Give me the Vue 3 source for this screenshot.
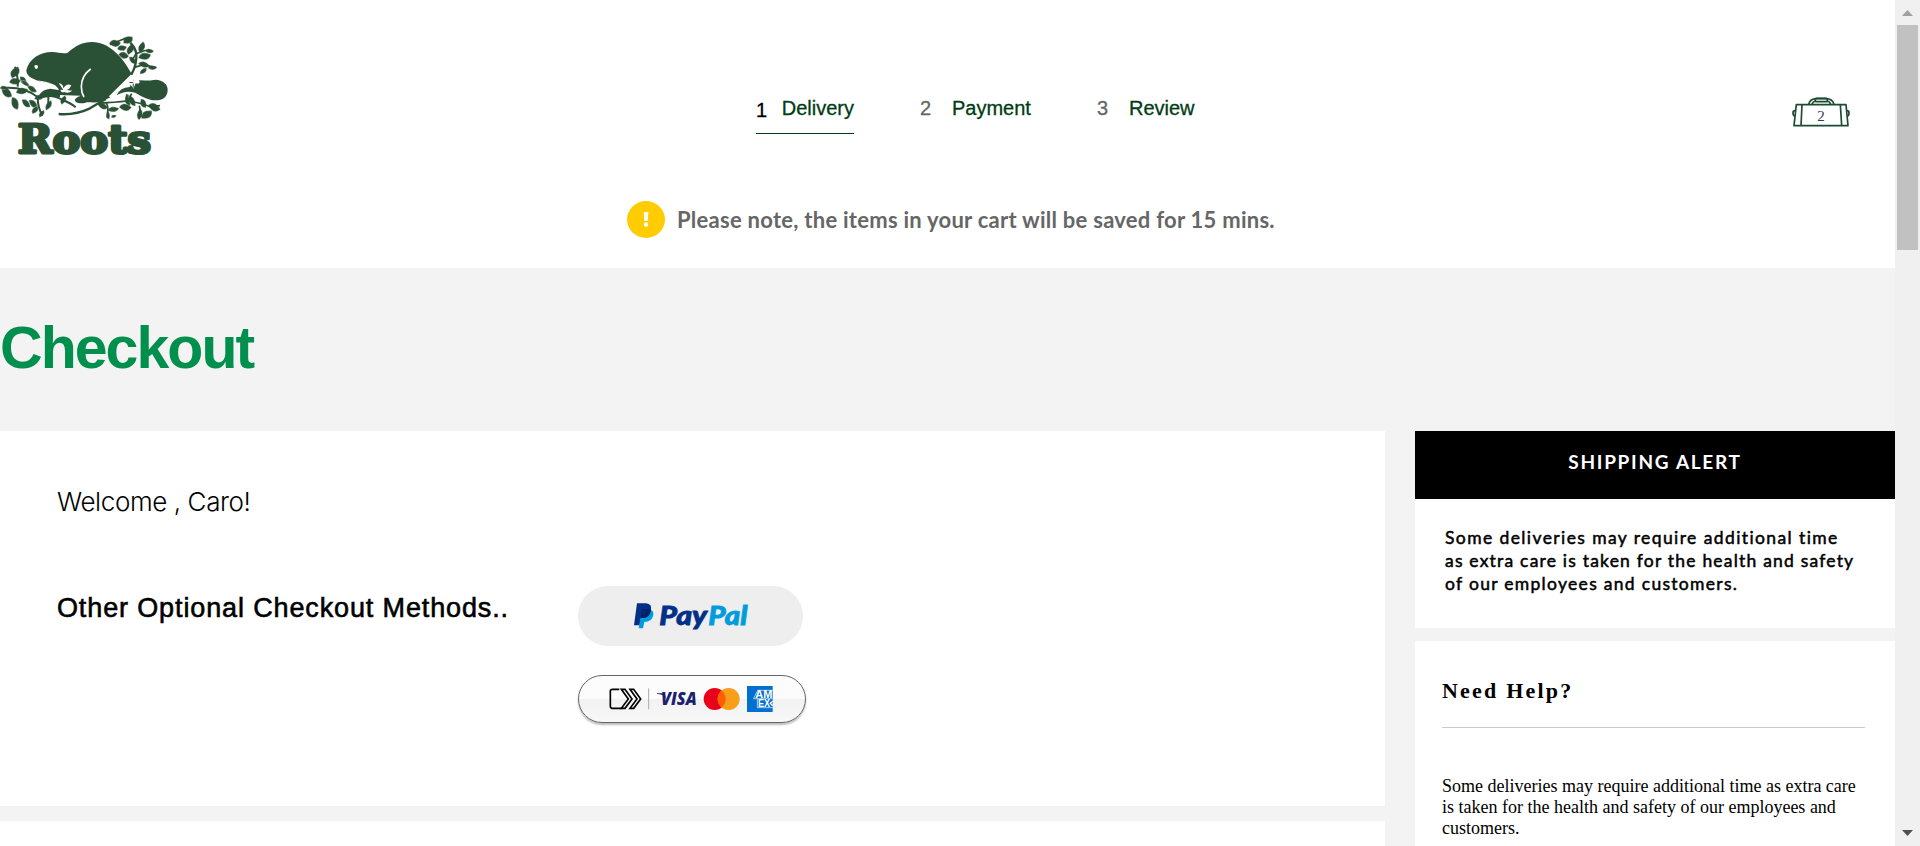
<script setup>
const steps = [
  { n: 1, label: 'Delivery', active: true },
  { n: 2, label: 'Payment', active: false },
  { n: 3, label: 'Review', active: false },
]
// x, y, tilt in degrees, half length, half width
const leaves = [
  [45, 157, 62, 20, 12], [45, 184, 10, 18, 10], [70, 182, -50, 16, 9], [20, 218, -35, 20, 12], [10, 203, 10, 11, 6],
  [45, 250, -65, 21, 11], [66, 213, 15, 19, 10], [78, 250, -40, 17, 9], [100, 252, -40, 18, 9], [96, 207, -30, 17, 8],
  [105, 270, 60, 14, 8], [125, 281, 60, 13, 7], [118, 232, 20, 16, 8], [146, 256, 65, 17, 8], [76, 190, -30, 15, 6],
  [345, 70, 5, 18, 11], [384, 60, 35, 17, 12], [366, 84, 15, 15, 9], [371, 106, -10, 16, 10], [391, 88, 70, 18, 10],
  [425, 82, 75, 18, 10], [448, 93, 0, 14, 7], [434, 109, 15, 20, 11], [398, 121, -40, 15, 8], [432, 134, -10, 18, 9],
  [457, 143, 5, 14, 7], [430, 153, 45, 14, 7], [384, 240, -75, 20, 10], [396, 243, -55, 19, 9], [376, 262, 0, 19, 11],
  [430, 250, -60, 16, 9], [463, 262, -20, 20, 12], [440, 284, 35, 20, 12], [419, 283, 85, 18, 8], [340, 268, 10, 18, 8],
  [324, 286, -75, 13, 6], [341, 289, 20, 9, 5], [308, 258, -20, 17, 9], [190, 240, 70, 15, 8],
]
const methodsTitle = 'Other Optional Checkout Methods..'
</script>

<template>
  <div class="window">
    <div class="page">
      <header class="header">
        <div class="topbar">
          <svg class="logo" viewBox="0 0 570 450" fill="#2a5135">
            <path
              v-for="(l, i) in leaves"
              :key="i"
              :d="`M${-l[3]} 0Q${-l[3] * 0.3} ${-l[4] * 2} ${l[3]} 0Q${l[3] * 0.3} ${l[4] * 2} ${-l[3]} 0Z`"
              :transform="`translate(${l[0]} ${l[1]}) rotate(${-l[2]})`"
              stroke="#fff"
              stroke-width="1"
            />
            <path d="M79 151C87 116 120 96 156 96C176 96 190 103 203 98C226 78 247 66 277 66C326 66 366 109 393 158L397 164L329 233L318 238C306 250 284 247 260 247C252 252 228 251 225 242C224 234 232 232 242 227L180 225C180 205 166 193 149 190C130 187 117 184 106 179C89 174 79 163 79 151Z" />
            <path d="M111 181Q132 184 154 190L130 188Z" fill="#fff" />
            <path d="M103 137Q109 132 114 138Q115 147 107 147Q103 143 103 137Z" fill="#fff" />
            <path d="M272 147Q244 167 244 200Q244 218 252 231" fill="none" stroke="#fff" stroke-width="5" />
            <path d="M176 189Q190 192 190 205Q200 188 214 196Q209 208 199 210L217 212Q204 222 193 216Q184 220 181 209L190 210Z" fill="#fff" />
            <path d="M118 224Q128 208 151 206L180 211V231Q150 228 130 234Z" />
            <path d="M400 178Q435 185 466 179C490 180 503 193 503 209C503 230 489 241 466 241C442 240 426 229 405 218Q377 209 350 226Q360 202 389 201Z" />
            <path d="M382 185Q392 176 400 182L399 173Q416 173 418 183Q422 193 407 190L400 206Q392 192 382 185Z" fill="#fff" />
            <path d="M388 187L400 188M400 191L399 204" fill="none" stroke="#2a5135" stroke-width="3" />
            <path d="M176 282Q226 286 270 265Q297 248 318 237M394 164Q411 134 409 101Q405 81 391 69" fill="none" stroke="#2a5135" stroke-width="7" />
            <path d="M395 166L329 231" fill="none" stroke="#fff" stroke-width="6" />
            <path d="M10 204Q70 199 113 231Q155 221 188 240Q214 250 227 262M114 232Q111 256 127 287M145 229V258M53 200Q56 178 45 140" fill="none" stroke="#2a5135" stroke-width="6" />
            <path d="M298 249Q346 247 381 243Q421 247 452 261L480 257M320 250Q326 263 322 293M383 243L395 221M398 118L408 101L437 91M404 142L429 134L469 143M330 74L376 55M418 257L424 291" fill="none" stroke="#2a5135" stroke-width="5" />
            <text x="53" y="400" textLength="400" lengthAdjust="spacingAndGlyphs" class="wordmark">Roots</text>
          </svg>
          <nav class="steps">
            <div v-for="s in steps" :key="s.n" class="step" :class="{ active: s.active }">
              <span class="num">{{ s.n }}</span><span class="label">{{ s.label }}</span>
            </div>
          </nav>
          <div class="bag">
            <svg viewBox="0 0 174 90" fill="none" stroke="#1b4b31" stroke-width="5" stroke-linejoin="round">
              <path d="M13 23H162L168 86H6ZM30 23L27 86M145 23L149 86" />
              <path d="M50 22Q54 5 74 5H102Q121 5 126 22M60 22Q62 13 72 12M104 12Q114 13 116 22" />
              <rect x="70" y="4" width="36" height="10" rx="3" />
              <path d="M10 41Q3 41 3 47Q3 56 9 57M164 41Q171 41 171 47Q171 56 166 57" />
            </svg>
            <span class="bag-count">2</span>
          </div>
        </div>
        <div class="notice">
          <span class="notice-icon">
            <svg viewBox="0 0 38 37"><ellipse cx="19" cy="18.5" rx="19" ry="18.5" fill="#fc0" /><path d="M16.7 11H21.3L20.7 20H17.3Z" fill="#fff" /><circle cx="19" cy="23.5" r="2.2" fill="#fff" /></svg>
          </span>
          <span class="notice-text">Please note, the items in your cart will be saved for 15 mins.</span>
        </div>
      </header>

      <h1 class="title"><span>Checkout</span></h1>

      <div class="columns">
        <main class="main">
          <section class="card welcome-card">
            <p class="welcome">Welcome , Caro!</p>
            <div class="methods">
              <h2>{{ methodsTitle }}</h2>
              <div class="buttons">
                <button class="pay paypal" aria-label="PayPal">
                  <svg viewBox="0 0 342 80">
                    <path d="M24 21H48Q60 23 58 36Q54 57 31 57L27 76H14Z" fill="#009cde" />
                    <path d="M9 1H36Q55 3 51 22Q47 45 25 45H20L16 67H0Z" fill="#003087" />
                    <path d="M25 18H51Q49 45 25 45H20Z" fill="#012169" />
                    <text x="76" y="67" textLength="143" lengthAdjust="spacingAndGlyphs" fill="#003087" stroke="#003087">Pay</text>
                    <text x="223" y="67" textLength="117" lengthAdjust="spacingAndGlyphs" fill="#009cde" stroke="#009cde">Pal</text>
                  </svg>
                </button>
                <button class="pay src" aria-label="Click to pay">
                  <svg viewBox="0 0 492 78">
                    <g fill="none" stroke="#000" stroke-width="5">
                      <path d="M31 10H10Q4 10 4 16V61Q4 67 10 67H37" />
                      <path d="M37 10H48L69 39L48 67H37L58 39ZM63 10H74L95 39L74 67H63L84 39Z" />
                    </g>
                    <path d="M119 7V70" stroke="#aaa" stroke-width="3" />
                    <path d="M144 22H166L176 48L170 35Q162 25 144 24Z" fill="#1a1f71" />
                    <text x="156" y="58" textLength="107" lengthAdjust="spacingAndGlyphs" class="visa">VISA</text>
                    <circle cx="317" cy="39" r="33" fill="#eb001b" /><circle cx="359" cy="39" r="33" fill="#f79e1b" />
                    <path d="M338 13.600A33 33 0 0 1 338 64.400A33 33 0 0 1 338 13.600Z" fill="#ff5f00" />
                    <rect x="414" width="77" height="78" fill="#016fd0" />
                    <text x="439" y="36" textLength="51" lengthAdjust="spacingAndGlyphs" class="amex">AM</text>
                    <text x="447" y="62" textLength="36" lengthAdjust="spacingAndGlyphs" class="amex">EX</text>
                    <path d="M491 46L484 52L491 59" fill="none" stroke="#fff" stroke-width="4" />
                    <path d="M434 38L446 13H491M445 38V65H491M434 38H491" stroke="#fff" stroke-width="2" fill="none" />
                  </svg>
                </button>
              </div>
            </div>
          </section>
          <section class="card next-card"></section>
        </main>

        <aside class="side">
          <section class="card">
            <h3 class="alert-title">SHIPPING ALERT</h3>
            <p class="alert-text">
              <span class="l1">Some deliveries may require additional time</span><br />
              <span class="l2">as extra care is taken for the health and safety</span><br />
              <span class="l3">of our employees and customers.</span>
            </p>
          </section>
          <section class="card help">
            <h3>Need Help?</h3>
            <p>Some deliveries may require additional time as extra care<br />is taken for the health and safety of our employees and<br />customers.</p>
          </section>
        </aside>
      </div>
    </div>
    <div class="scrollbar">
      <svg viewBox="0 0 11 6"><path d="M0 6L5.500 0L11 6Z" fill="#a0a0a0" /></svg>
      <div class="thumb"></div>
      <svg class="down" viewBox="0 0 11 6"><path d="M0 0H11L5.500 6Z" fill="#505050" /></svg>
    </div>
  </div>
</template>

<style>
html, body { margin: 0; overflow: hidden; }
</style>

<style scoped>
.window { display: flex; width: 1920px; height: 846px; overflow: hidden; font-family: "Liberation Sans", Arial, sans-serif; color: #000; }
.page { width: 1895px; height: 846px; overflow: hidden; background: #f3f3f3; }
h1, h2, h3, p { margin: 0; font-weight: normal; }
svg { display: block; }

.header { height: 268px; background: #fff; }
.topbar { display: flex; height: 170px; }
.logo { width: 190px; height: 150px; margin-top: 20px; }
.wordmark { font: bold 118px "DejaVu Serif", serif; fill: #2a5135; stroke: #2a5135; stroke-width: 9; stroke-linejoin: round; }
.steps { display: flex; gap: 66px; margin: 95px 0 0 566px; height: 39px; }
.step { display: flex; font-size: 20px; line-height: 26px; height: 38px; color: #003c14; -webkit-text-stroke: 0.3px; }
.step .num { width: 32px; color: #666; }
.step .label { white-space: nowrap; }
.step.active { border-bottom: 1px solid #003c14; width: 98px; }
.step.active .num { width: 27px; color: #000; padding-top: 2px; }
.bag { display: grid; width: 58px; height: 30px; margin: 97px 45px 0 auto; }
.bag > * { grid-area: 1 / 1; }
.bag svg { width: 58px; height: 30px; }
.bag-count { text-align: center; font: 15px/18px "Liberation Serif", serif; padding-top: 10px; color: #333a50; }

.notice { display: flex; padding: 31px 0 0 627px; }
.notice-icon svg { width: 38px; height: 37px; }
.notice-text { margin-left: 12px; font: bold 22px/37px Lato, sans-serif; letter-spacing: 0.26px; color: #666; white-space: nowrap; }

.title { height: 163px; box-sizing: border-box; padding-top: 46px; font-size: 59px; font-weight: bold; line-height: 68px; letter-spacing: -1.95px; color: #008f4c; }

.columns { display: grid; grid-template-columns: 1385px 480px; gap: 30px; }
.card { background: #fff; }
.welcome-card { height: 375px; box-sizing: border-box; padding: 54px 0 0 57px; }
.next-card { margin-top: 15px; height: 60px; }
.welcome { font: 300 26px/34px Inter, sans-serif; letter-spacing: -0.4px; }
.methods { display: flex; margin-top: 67px; }
.methods h2 { width: 521px; padding-top: 5px; font-size: 27px; line-height: 34px; letter-spacing: 0.87px; -webkit-text-stroke: 0.6px; white-space: nowrap; }
.buttons { display: flex; flex-direction: column; gap: 29px; }
.pay { display: block; padding: 0; box-sizing: border-box; border: 0; }
.paypal { width: 225px; height: 60px; border-radius: 30px; background: #eee; }
.paypal svg { width: 114px; height: 26.7px; margin: 0 0 0 56px; overflow: visible; font: italic 900 81px Lato, sans-serif; stroke-width: 2.5; }
.paypal path { stroke: none; }
.src { width: 228px; height: 48px; border: 1px solid #666; border-radius: 24px; background: linear-gradient(#fcfcfc 0 50%, #f2f2f2 51%, #f7f7f7); box-shadow: 0 2px 2px #bbb; }
.src svg { width: 164px; height: 26px; margin-left: 30px; }
.visa { font: italic 900 51px "Open Sans", sans-serif; fill: #1a1f71; }
.amex { font: bold 30px "Liberation Sans", sans-serif; fill: #fff; }

.alert-title { height: 68px; box-sizing: border-box; padding-top: 17px; background: #000; color: #fff; text-align: center; font: bold 19px/27px Lato, sans-serif; letter-spacing: 1.7px; }
.alert-text { height: 129px; box-sizing: border-box; padding: 27px 0 0 30px; font: 17.5px/23px Lato, sans-serif; -webkit-text-stroke: 0.5px; white-space: nowrap; }
.l1 { letter-spacing: 1.4px; }
.l2 { letter-spacing: 1.2px; }
.l3 { letter-spacing: 1.3px; }
.help { margin-top: 13px; height: 260px; padding: 0 30px 0 27px; font-family: "Liberation Serif", serif; }
.help h3 { height: 86px; border-bottom: 1px solid #c8c8c8; font-size: 22px; font-weight: bold; line-height: 99px; letter-spacing: 2.2px; }
.help p { padding-top: 48px; font-size: 18px; line-height: 21px; white-space: nowrap; }

.scrollbar { width: 25px; background: #f0f0f0; display: flex; flex-direction: column; align-items: center; }
.scrollbar svg { width: 11px; height: 6px; margin-top: 10px; }
.scrollbar .thumb { width: 21px; height: 225px; margin-top: 9px; background: #c1c1c1; }
.scrollbar .down { margin: auto 0 10px; }
</style>
